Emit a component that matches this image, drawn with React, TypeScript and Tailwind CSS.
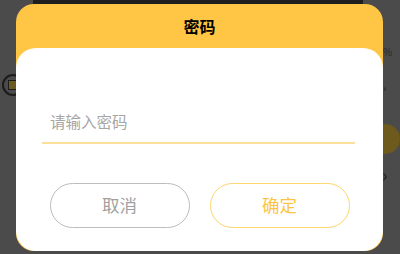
import { useState } from 'react';

export default function App() {
  const [pwd, setPwd] = useState('');

  return (
    <div
      className="relative w-[400px] h-[254px] overflow-hidden bg-[#4b4b4b]"
      style={{ fontFamily: '"Noto Sans CJK SC", "Noto Sans", sans-serif' }}
    >
      {/* dimmed page behind the dialog */}
      <div className="absolute left-[33px] right-[37px] top-0 h-[4px] bg-[#1e1e1e]" />
      <div className="absolute left-[2px] top-[74px] w-[22px] h-[22px] rounded-full border-2 border-[#1c1c1c]" />
      <div className="absolute left-[8px] top-[80px] w-[10px] h-[10px] bg-[#6b5a22] border border-[#1c1c1c]" />
      <div className="absolute left-[383px] top-[44px] text-[10px] text-[#2a2a2a]">%</div>
      <div className="absolute left-[383px] top-[80px] text-[10px] text-[#1c1c1c]">›</div>
      <div className="absolute left-[370px] top-[124px] w-[30px] h-[30px] rounded-full bg-[#6e5a1c]" />
      <div className="absolute left-[382px] top-[165px] text-[18px] leading-none text-[#1c1c1c]">›</div>

      {/* dialog */}
      <div className="relative ml-[16px] mt-[4px] w-[367px] h-[247px] rounded-[18px] overflow-hidden bg-[#ffc646] flex flex-col">
        <div className="h-[44px] flex items-center justify-center text-[16px] font-bold text-black">
          密码
        </div>
        <div className="flex-1 bg-white rounded-[20px] flex flex-col">
          <div className="mt-[52px] ml-[26px] mr-[28px] border-b-2 border-[#fbdf9c]">
            <input
              type="password"
              value={pwd}
              onChange={(e) => setPwd(e.target.value)}
              placeholder="请输入密码"
              className="w-full h-[42px] px-[8px] text-[15.5px] outline-none text-[#333] placeholder:text-[#a6a6a6]"
            />
          </div>
          <div className="mt-[39px] flex justify-center gap-[20px]">
            <button className="w-[140px] h-[45px] rounded-full border border-[#bdbdbd] text-[17.5px] text-[#a0a0a0]">
              取消
            </button>
            <button className="w-[140px] h-[45px] rounded-full border border-[#fcd66e] text-[17.5px] text-[#fbc543]">
              确定
            </button>
          </div>
        </div>
      </div>
    </div>
  );
}
